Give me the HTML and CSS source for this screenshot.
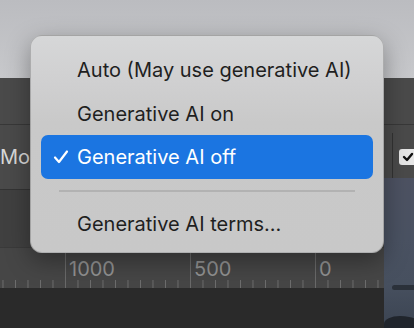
FILE: index.html
```html
<!DOCTYPE html>
<html lang="en">
<head>
    <meta charset="UTF-8">
    <title>Generative AI menu</title>
    <link rel="stylesheet" href="styles.css">
</head>
<body>
    <div class="app">
        <div class="toolbar"></div>
        <div class="bar bar-top"></div>
        <div class="bar bar-mode">
            <span class="mode-label">Mode</span>
            <div class="mode-right">
                <span class="divider"></span>
                <span class="checkbox">
                    <svg width="12" height="10" viewBox="0 0 12 10"><path d="M2 5 L5 8 L10 2" fill="none" stroke="#111" stroke-width="2.4" stroke-linecap="round" stroke-linejoin="round"/></svg>
                </span>
            </div>
        </div>
        <div class="lower">
            <div class="work">
                <div class="bar-tail"></div>
                <div class="panel"></div>
                <div class="ruler">
                    <div class="ruler-cell"></div>
                    <div class="ruler-cell">1000</div>
                    <div class="ruler-cell">500</div>
                    <div class="ruler-cell">0</div>
                </div>
                <div class="canvas"></div>
            </div>
            <div class="photo">
                <div class="cloud"></div>
                <div class="trees"></div>
            </div>
        </div>

        <div class="menu">
            <div class="menu-item">Auto (May use generative AI)</div>
            <div class="menu-item">Generative AI on</div>
            <div class="menu-item selected">
                <svg class="check" width="16" height="16" viewBox="0 0 16 16"><path d="M2 8.5 L6 13 L14 2.5" fill="none" stroke="#fff" stroke-width="2.2" stroke-linecap="round" stroke-linejoin="round"/></svg>
                Generative AI off
            </div>
            <div class="menu-separator"></div>
            <div class="menu-item">Generative AI terms...</div>
        </div>
    </div>
</body>
</html>
```

FILE: styles.css
```css
* {
    margin: 0;
    padding: 0;
    box-sizing: border-box;
}

body {
    font-family: Inter, 'Noto Sans', sans-serif;
    background-color: #2a2a2a;
    overflow: hidden;
}

.app {
    position: relative;
    width: 414px;
    height: 328px;
    display: flex;
    flex-direction: column;
}

.toolbar {
    height: 78px;
    background: linear-gradient(#bbbcc0, #c7c8cb);
}

.bar {
    background-color: #4a4a4a;
}

.bar-top {
    height: 47px;
    border-bottom: 1px solid #383838;
}

.bar-mode {
    height: 53px;
    display: flex;
    align-items: center;
    justify-content: space-between;
}

.mode-label {
    margin-top: 10px;
    color: #d8d8d8;
    font-size: 20px;
}

.mode-right {
    display: flex;
    align-items: center;
    height: 100%;
    padding-top: 8px;
}

.divider {
    width: 1px;
    height: 100%;
    background-color: #333;
    margin-right: 6px;
}

.checkbox {
    width: 22px;
    height: 16px;
    margin-right: -7px;
    margin-top: 2px;
    border-radius: 3px;
    background-color: #e6e6e6;
    display: flex;
    align-items: center;
    padding-left: 3px;
}

.lower {
    flex: 1;
    display: flex;
}

.work {
    flex: 1;
    display: flex;
    flex-direction: column;
    overflow: hidden;
}

.bar-tail {
    height: 12px;
    background-color: #4a4a4a;
    border-bottom: 1px solid #333;
}

.panel {
    height: 57px;
    background-color: #404040;
}

.ruler {
    height: 41px;
    display: flex;
    margin-left: -60px;
    background-color: #464646;
    background-image: linear-gradient(to right, #6e6e6e 1px, transparent 1px);
    background-size: 12.5px 8px;
    background-position: 0 100%;
    background-repeat: repeat-x;
    border-top: 1px solid #3a3a3a;
}

.ruler-cell {
    flex: 0 0 125px;
    border-left: 1px solid #6a6a6a;
    color: #929292;
    font-size: 20px;
    padding: 9px 0 0 3px;
}

.canvas {
    flex: 1;
    background-color: #2a2a2a;
}

.photo {
    position: relative;
    width: 30px;
    background: linear-gradient(#4d5262, #4a5262 40%, #47505f 70%, #3b4452);
    overflow: hidden;
}

.cloud {
    position: absolute;
    left: 8px;
    top: 107px;
    width: 30px;
    height: 5px;
    border-radius: 3px;
    background-color: #2b313a;
}

.trees {
    position: absolute;
    left: 0;
    bottom: -8px;
    width: 40px;
    height: 20px;
    border-radius: 40% 60% 0 0;
    background-color: #20252c;
}

/* popup menu */
.menu {
    position: absolute;
    left: 30px;
    top: 35px;
    width: 354px;
    height: 218px;
    padding: 12px 10px 8px;
    border-radius: 12px;
    background: linear-gradient(#d6d7d8, #d0d0d1 20%, #c9c9c9 40%, #c8c8c8);
    border: 1px solid rgba(0, 0, 0, 0.18);
    box-shadow: 0 8px 24px rgba(0, 0, 0, 0.35);
}

.menu-item {
    position: relative;
    height: 44px;
    display: flex;
    align-items: center;
    padding-left: 36px;
    font-size: 20px;
    color: #1f1f1f;
    border-radius: 7px;
}

.menu-item.selected {
    background-color: #1b75e1;
    color: #fff;
    margin-top: -1px;
}

.check {
    position: absolute;
    left: 12px;
    top: 14px;
}

.menu-separator {
    height: 23px;
    margin: 0 18px;
    background: linear-gradient(transparent 11px, #b2b2b2 11px, #b2b2b2 13px, transparent 13px);
}
```
